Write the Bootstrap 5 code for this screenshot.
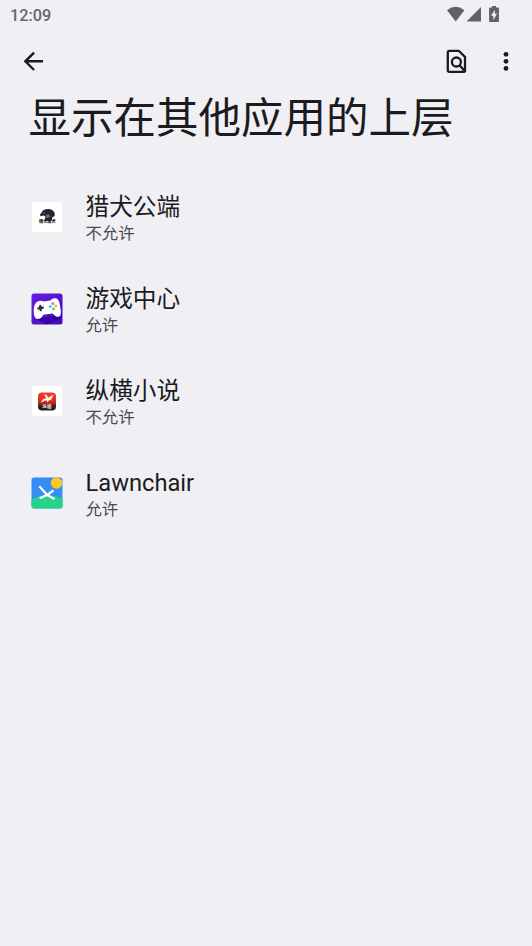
<!DOCTYPE html>
<html lang="zh-CN">
<head>
<meta charset="utf-8">
<meta name="viewport" content="width=device-width, initial-scale=1">
<title>显示在其他应用的上层</title>
<link rel="stylesheet" href="https://cdn.jsdelivr.net/npm/bootstrap@5.3.0/dist/css/bootstrap.min.css">
<style>
body{background:#f0eff4;color:#1b1b1e;font-family:Roboto,"Noto Sans CJK SC",sans-serif;min-height:946px;overflow:hidden}
svg{display:block;flex:none}
.status-bar{height:30px;padding:0 33px 0 10px;color:#67666b;font-size:16.3px;font-weight:500;line-height:31px}
.status-icons{padding-top:6px}
.toolbar{height:62px;padding:0 12px 0 20px}
.tool-actions{gap:21px}
.tool-btn{background:none;border:0;padding:0;color:#1b1b1e}
.page-title{font-size:42.5px;line-height:50px;font-weight:400;margin:0;padding:2px 0 0 28.6px;height:78.5px}
.app-row{height:92.2px;padding-left:31.3px;gap:22.2px}
.app-text{padding-top:5px}
.app-name{font-size:23.7px;line-height:29px;white-space:nowrap}
.app-state{font-size:16.4px;line-height:24px;color:#4b4a4f}
</style>
</head>
<body>
<header>
  <div class="status-bar d-flex justify-content-between align-items-start">
    <span>12:09</span>
    <div class="status-icons d-flex align-items-start">
      <svg width="52" height="17" viewBox="0 0 52 17" fill="#626166">
        <path d="M0 4.2Q8.7-2.6 17.4 4.2L8.7 15.5Z"/>
        <path d="M34 1V15.5H19.5Z"/>
        <path d="M45 0h4v1.6h2q.9 0 .9.9V15q0 .9-.9.9h-8q-.9 0-.9-.9V2.5q0-.9.9-.9h2z"/>
        <path d="M47.8 3.7v4h2.2l-3.7 6.6V9.8h-2.2z" fill="#f0eff4"/>
      </svg>
    </div>
  </div>
  <nav class="toolbar d-flex justify-content-between align-items-center">
    <button class="tool-btn" aria-label="返回">
      <svg width="26" height="26" viewBox="0 0 26 26" fill="none" stroke="currentColor" stroke-width="2.4"><path d="M23 13.3H5.5M14.1 4.6 5.3 13.3l8.8 8.7"/></svg>
    </button>
    <div class="tool-actions d-flex align-items-center">
      <button class="tool-btn" aria-label="搜索">
        <svg width="28" height="28" viewBox="0 0 28 28" fill="none" stroke="currentColor" stroke-width="2.3"><path d="M22 23.8V10l-6.2-6.2H6.4q-1.6 0-1.6 1.6v17.9q0 1.6 1.6 1.6h13.9q.9 0 1.6-.6L16.3 18"/><circle cx="13.4" cy="15" r="4.5"/></svg>
      </button>
      <button class="tool-btn" aria-label="更多">
        <svg width="28" height="28" viewBox="0 0 28 28" fill="currentColor"><circle cx="14" cy="7.3" r="2.4"/><circle cx="14" cy="14.3" r="2.4"/><circle cx="14" cy="21.4" r="2.4"/></svg>
      </button>
    </div>
  </nav>
</header>
<main>
  <h1 class="page-title">显示在其他应用的上层</h1>
  <div class="d-flex flex-column">
    <div class="app-row d-flex align-items-center">
      <svg width="32" height="32" viewBox="0 0 32 32">
        <rect x=".5" y=".5" width="31" height="31" rx="3" fill="#fff" stroke="#ebeaf0" stroke-width=".6"/>
        <path d="M9 13.5 12.5 9q5-2.3 9 .3 3 2 2 6l-2 .8-.8 3.4h-7.2l1-3.5-1.7-1.4-3.3.7z" fill="#24232f"/>
        <path d="m14 15 3.4-2 2 2.5-3.2 1.8z" fill="#85647a"/><path d="m12 12.5 2-.5" stroke="#4977a5"/>
        <text x="16.3" y="22" text-anchor="middle" font-size="4.1" font-weight="900" fill="#111">猎犬猎犬</text>
      </svg>
      <div class="app-text"><div class="app-name">猎犬公端</div><div class="app-state">不允许</div></div>
    </div>
    <div class="app-row d-flex align-items-center">
      <svg width="32" height="32" viewBox="0 0 32 32">
        <defs><linearGradient id="violet" x2="1" y2="1"><stop stop-color="#6820df"/><stop offset="1" stop-color="#4308bd"/></linearGradient></defs>
        <rect x=".5" y=".5" width="31" height="31" rx="2.5" fill="url(#violet)"/>
        <path d="M5 25.5 28 22l2 4-15 5.5z" fill="#3406a1"/>
        <path d="M7 8.3q3.3-1.4 5.8.2l6.3-1q2.5-2.7 5.5-2.2 3.1.3 4 5.3l1.3 7.7q.5 5-2.8 5.6-2.5.2-5.5-3.5l-9.3 1.3q-2.5 4.5-5.7 4.3-3.7-.7-3.9-7.1Q2.3 10.5 7 8.3z" fill="#fff"/>
        <path d="m9.1 12 .8 6.2M6.4 15.5l6.3-.8" stroke="#28273c" stroke-width="2.2"/>
        <circle cx="21.8" cy="10.7" r="1.4" fill="#b16bee"/><circle cx="19.3" cy="13.6" r="1.4" fill="#36bde5"/><circle cx="24.8" cy="12.8" r="1.4" fill="#f2ac3d"/><circle cx="22.6" cy="16" r="1.4" fill="#55cc4a"/>
      </svg>
      <div class="app-text"><div class="app-name">游戏中心</div><div class="app-state">允许</div></div>
    </div>
    <div class="app-row d-flex align-items-center">
      <svg width="32" height="32" viewBox="0 0 32 32">
        <defs><linearGradient id="ember" x2="0" y2="1"><stop stop-color="#fa3b27"/><stop offset=".5" stop-color="#d92b20"/><stop offset=".78" stop-color="#38201e"/><stop offset="1" stop-color="#24191a"/></linearGradient></defs>
        <rect x=".5" y=".5" width="31" height="31" rx="3" fill="#fff" stroke="#ebeaf0" stroke-width=".6"/>
        <rect x="7" y="7.5" width="18" height="18" rx="4" fill="url(#ember)"/>
        <path d="m13.2 9 3 1.5.8 2.3 5.6-3.4-2.3 5-2.5 1-1.5 2.4-.3-2.3-2.7.2-3.8 2.2 2.6-4 3-.6z" fill="#fff1e7"/>
        <text x="16" y="23.4" text-anchor="middle" font-size="4.4" font-weight="700" fill="#eed8d4">纵横</text>
      </svg>
      <div class="app-text"><div class="app-name">纵横小说</div><div class="app-state">不允许</div></div>
    </div>
    <div class="app-row d-flex align-items-center">
      <svg width="32" height="32" viewBox="0 0 32 32">
        <defs><clipPath id="tile"><rect x=".5" y=".5" width="31" height="31" rx="2.5"/></clipPath><linearGradient id="sky" x2="0" y2="1"><stop stop-color="#378af5"/><stop offset="1" stop-color="#3994f1"/></linearGradient></defs>
        <g clip-path="url(#tile)"><path d="M0 0h32v32H0z" fill="url(#sky)"/><path d="M0 22.8Q15 15 32 21.5V32H0z" fill="#25d486"/></g>
        <circle cx="25.5" cy="6" r="5.8" fill="#fac928"/>
        <path d="m8.3 9.3 7.9 8.7 7.3 4M8.6 21.3l7.6-3.3 6.2-4.6" fill="none" stroke="#fff" stroke-width="2.3" stroke-linejoin="round"/>
      </svg>
      <div class="app-text"><div class="app-name">Lawnchair</div><div class="app-state">允许</div></div>
    </div>
  </div>
</main>
<script src="https://cdn.jsdelivr.net/npm/bootstrap@5.3.0/dist/js/bootstrap.bundle.min.js"></script>
</body>
</html>
